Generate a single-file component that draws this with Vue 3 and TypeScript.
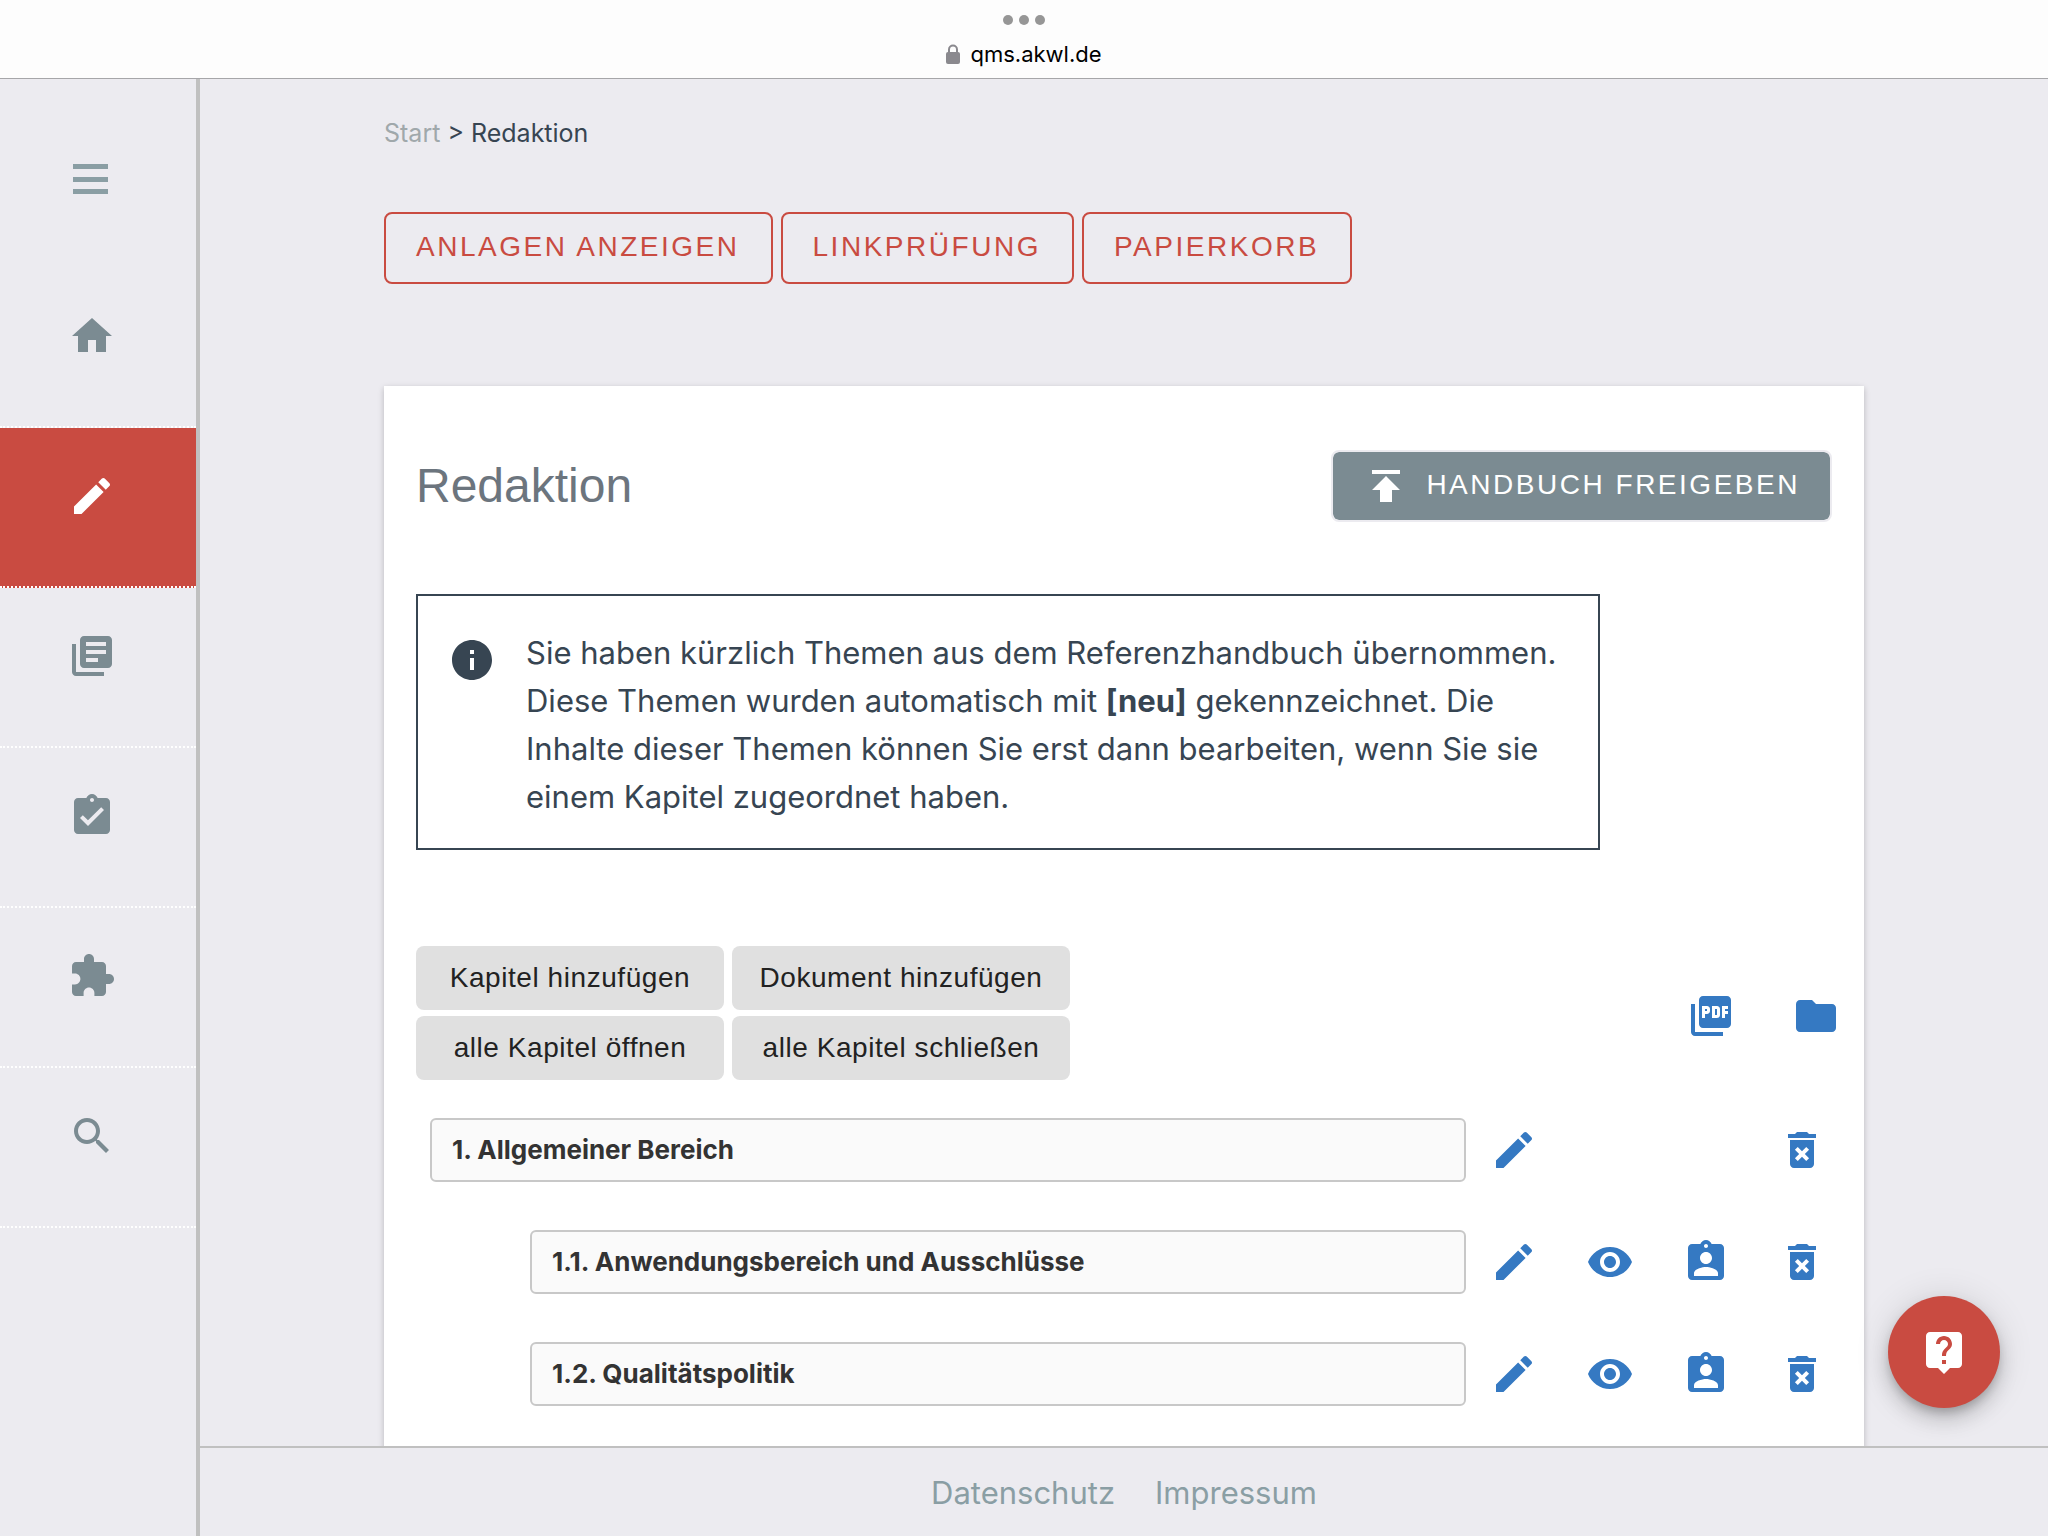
<script setup lang="ts">
import { ref } from 'vue'

type IconName = keyof typeof icons

interface NavItem {
  icon: IconName
  label: string
}

interface Chapter {
  number: string
  title: string
  level: number
  actions: (IconName | null)[]
}

const clipboard =
  'M19 3h-4.18C14.4 1.84 13.3 1 12 1c-1.3 0-2.4.84-2.82 2H5c-1.1 0-2 .9-2 2v14c0 1.1.9 2 2 2h14c1.1 0 2-.9 2-2V5c0-1.1-.9-2-2-2z'

const icons = {
  home: 'M10 20v-6h4v6h5v-8h3L12 3 2 12h3v8z',
  edit: 'M3 17.25V21h3.75L17.81 9.94l-3.75-3.75L3 17.25zM20.71 7.04c.39-.39.39-1.02 0-1.41l-2.34-2.34c-.39-.39-1.02-.39-1.41 0l-1.83 1.83 3.75 3.75 1.83-1.83z',
  library:
    'M4 6H2v14c0 1.1.9 2 2 2h14v-2H4V6zm16-4H8c-1.1 0-2 .9-2 2v12c0 1.1.9 2 2 2h12c1.1 0 2-.9 2-2V4c0-1.1-.9-2-2-2zm-1 9H9V9h10v2zm-4 4H9v-2h6v2zm4-8H9V5h10v2z',
  tasks: clipboard + 'm-7 0c.55 0 1 .45 1 1s-.45 1-1 1-1-.45-1-1 .45-1 1-1zm-2 14l-4-4 1.41-1.41L10 14.17l6.59-6.59L18 9l-8 8z',
  extension:
    'M20.5 11H19V7c0-1.1-.9-2-2-2h-4V3.5C13 2.12 11.88 1 10.5 1S8 2.12 8 3.5V5H4c-1.1 0-1.99.9-1.99 2v3.8H3.5c1.49 0 2.7 1.21 2.7 2.7s-1.21 2.7-2.7 2.7H2V20c0 1.1.9 2 2 2h3.8v-1.5c0-1.49 1.21-2.7 2.7-2.7 1.49 0 2.7 1.21 2.7 2.7V22H17c1.1 0 2-.9 2-2v-4h1.5c1.38 0 2.5-1.12 2.5-2.5S21.88 11 20.5 11z',
  search:
    'M15.5 14h-.79l-.28-.27C15.41 12.59 16 11.11 16 9.5 16 5.91 13.09 3 9.5 3S3 5.91 3 9.5 5.91 16 9.5 16c1.61 0 3.09-.59 4.23-1.57l.27.28v.79l5 4.99L20.49 19l-4.99-5zm-6 0C7.01 14 5 11.99 5 9.5S7.01 5 9.5 5 14 7.01 14 9.5 11.99 14 9.5 14z',
  publish: 'M5 4v2h14V4H5zm0 10h4v6h6v-6h4l-7-7-7 7z',
  info: 'M12 2C6.48 2 2 6.48 2 12s4.48 10 10 10 10-4.48 10-10S17.52 2 12 2zm1 15h-2v-6h2v6zm0-8h-2V7h2v2z',
  pdf: 'M20 2H8c-1.1 0-2 .9-2 2v12c0 1.1.9 2 2 2h12c1.1 0 2-.9 2-2V4c0-1.1-.9-2-2-2zm-8.5 7.5c0 .83-.67 1.5-1.5 1.5H9v2H7.5V7H10c.83 0 1.5.67 1.5 1.5v1zm5 2c0 .83-.67 1.5-1.5 1.5h-2.5V7H15c.83 0 1.5.67 1.5 1.5v3zm4-3H19v1h1.5V11H19v2h-1.5V7h3v1.5zM9 9.5h1v-1H9v1zM4 6H2v14c0 1.1.9 2 2 2h14v-2H4V6zm10 5.5h1v-3h-1v3z',
  folder: 'M10 4H4c-1.1 0-1.99.9-1.99 2L2 18c0 1.1.9 2 2 2h16c1.1 0 2-.9 2-2V8c0-1.1-.9-2-2-2h-8l-2-2z',
  view: 'M12 4.5C7 4.5 2.73 7.61 1 12c1.73 4.39 6 7.5 11 7.5s9.27-3.11 11-7.5c-1.73-4.39-6-7.5-11-7.5zM12 17c-2.76 0-5-2.24-5-5s2.24-5 5-5 5 2.24 5 5-2.24 5-5 5zm0-8c-1.66 0-3 1.34-3 3s1.34 3 3 3 3-1.34 3-3-1.34-3-3-3z',
  assign:
    clipboard +
    'm-7 0c.55 0 1 .45 1 1s-.45 1-1 1-1-.45-1-1 .45-1 1-1zm0 4c1.66 0 3 1.34 3 3s-1.34 3-3 3-3-1.34-3-3 1.34-3 3-3zm6 12H6v-1.4c0-2 4-3.1 6-3.1s6 1.1 6 3.1V19z',
  remove:
    'M6 19c0 1.1.9 2 2 2h8c1.1 0 2-.9 2-2V7H6v12zm2.46-7.12l1.41-1.41L12 12.59l2.12-2.12 1.41 1.41L13.41 14l2.12 2.12-1.41 1.41L12 15.41l-2.12 2.12-1.41-1.41L10.59 14l-2.13-2.12zM15.5 4l-1-1h-5l-1 1H5v2h14V4z',
  help: 'M19 2H5c-1.11 0-2 .9-2 2v14c0 1.1.89 2 2 2h4l3 3 3-3h4c1.1 0 2-.9 2-2V4c0-1.1-.9-2-2-2zm-6 16h-2v-2h2v2zm2.07-7.75l-.9.92C13.45 11.9 13 12.5 13 14h-2v-.5c0-1.1.45-2.1 1.17-2.83l1.24-1.26c.37-.36.59-.86.59-1.41 0-1.1-.9-2-2-2s-2 .9-2 2H8c0-2.21 1.79-4 4-4s4 1.79 4 4c0 .88-.36 1.68-.93 2.25z',
} as const

const actionLabels: Partial<Record<IconName, string>> = {
  edit: 'Bearbeiten',
  view: 'Ansehen',
  assign: 'Zuweisen',
  remove: 'Löschen',
}

const active = ref<IconName>('edit')

const navItems: NavItem[] = [
  { icon: 'home', label: 'Start' },
  { icon: 'edit', label: 'Redaktion' },
  { icon: 'library', label: 'Handbuch' },
  { icon: 'tasks', label: 'Aufgaben' },
  { icon: 'extension', label: 'Module' },
  { icon: 'search', label: 'Suche' },
]

const pageActions = ['Anlagen anzeigen', 'Linkprüfung', 'Papierkorb']

const chapterActions = ['Kapitel hinzufügen', 'Dokument hinzufügen', 'alle Kapitel öffnen', 'alle Kapitel schließen']

const chapters: Chapter[] = [
  { number: '1.', title: 'Allgemeiner Bereich', level: 0, actions: ['edit', null, null, 'remove'] },
  { number: '1.1.', title: 'Anwendungsbereich und Ausschlüsse', level: 1, actions: ['edit', 'view', 'assign', 'remove'] },
  { number: '1.2.', title: 'Qualitätspolitik', level: 1, actions: ['edit', 'view', 'assign', 'remove'] },
]
</script>

<template>
  <div class="screen">
    <header class="browser-bar">
      <div class="dots"><i></i><i></i><i></i></div>
      <div class="address">
        <svg class="lock" viewBox="0 0 14 20" aria-hidden="true">
          <path d="M3 9V5.500a4 4 0 0 1 8 0V9" fill="none" stroke="currentColor" stroke-width="2" />
          <rect x="0" y="8" width="14" height="12" rx="2" fill="currentColor" />
        </svg>
        <span>qms.akwl.de</span>
      </div>
    </header>

    <div class="app">
      <nav class="sidebar" aria-label="Hauptnavigation">
        <button type="button" class="menu" aria-label="Menü">
          <svg viewBox="0 0 36 32" aria-hidden="true">
            <path d="M0 1h35v5H0zM0 14h35v5H0zM0 26h35v5H0z" fill="currentColor" />
          </svg>
        </button>
        <a
          v-for="item in navItems"
          :key="item.icon"
          href="#"
          class="nav-item"
          :class="{ active: item.icon === active }"
          :aria-label="item.label"
          @click.prevent="active = item.icon"
        >
          <svg class="icon" viewBox="0 0 24 24" aria-hidden="true"><path :d="icons[item.icon]" /></svg>
        </a>
      </nav>

      <div class="content">
        <main class="page">
          <div class="breadcrumb"><a href="#">Start</a> &gt; <span>Redaktion</span></div>

          <div class="page-actions">
            <button v-for="label in pageActions" :key="label" type="button" class="outlined">{{ label }}</button>
          </div>

          <section class="card">
            <div class="card-head">
              <h1>Redaktion</h1>
              <button type="button" class="release">
                <svg class="icon" viewBox="0 0 24 24" aria-hidden="true"><path :d="icons.publish" /></svg>
                <span>Handbuch freigeben</span>
              </button>
            </div>

            <div class="notice">
              <svg class="icon" viewBox="0 0 24 24" aria-hidden="true"><path :d="icons.info" /></svg>
              <p>
                Sie haben kürzlich Themen aus dem Referenzhandbuch übernommen. Diese Themen wurden automatisch mit
                <b>[neu]</b> gekennzeichnet. Die Inhalte dieser Themen können Sie erst dann bearbeiten, wenn Sie sie
                einem Kapitel zugeordnet haben.
              </p>
            </div>

            <div class="toolbar">
              <div class="chapter-actions">
                <button v-for="label in chapterActions" :key="label" type="button">{{ label }}</button>
              </div>
              <div class="exports">
                <button type="button" class="icon-button" aria-label="PDF">
                  <svg class="icon" viewBox="0 0 24 24" aria-hidden="true"><path :d="icons.pdf" /></svg>
                </button>
                <button type="button" class="icon-button" aria-label="Ordner">
                  <svg class="icon" viewBox="0 0 24 24" aria-hidden="true"><path :d="icons.folder" /></svg>
                </button>
              </div>
            </div>

            <ul class="chapters">
              <li v-for="chapter in chapters" :key="chapter.number" :class="{ nested: chapter.level > 0 }">
                <button type="button" class="chapter">{{ chapter.number }} {{ chapter.title }}</button>
                <div class="row-actions">
                  <template v-for="(action, i) in chapter.actions" :key="i">
                    <button v-if="action" type="button" class="icon-button" :aria-label="actionLabels[action]">
                      <svg class="icon" viewBox="0 0 24 24" aria-hidden="true"><path :d="icons[action]" /></svg>
                    </button>
                    <span v-else></span>
                  </template>
                </div>
              </li>
            </ul>
          </section>
        </main>

        <footer class="footer">
          <a href="#">Datenschutz</a>
          <a href="#">Impressum</a>
        </footer>
      </div>
    </div>

    <button type="button" class="fab" aria-label="Hilfe">
      <svg class="icon" viewBox="0 0 24 24" aria-hidden="true"><path :d="icons.help" /></svg>
    </button>
  </div>
</template>

<style>
body {
  margin: 0;
  background: #ecebf0;
}
</style>

<style scoped>
.screen {
  display: flex;
  flex-direction: column;
  height: 100vh;
  overflow: hidden;
  background: #ecebf0;
  color: #374552;
  font-family: Inter, 'Liberation Sans', sans-serif;
}

.screen * {
  box-sizing: border-box;
}

button {
  margin: 0;
  padding: 0;
  border: 0;
  background: none;
  color: inherit;
  font-family: 'Liberation Sans', Arial, sans-serif;
  font-size: 28px;
  cursor: pointer;
}

a {
  color: inherit;
  text-decoration: none;
}

.icon {
  display: block;
  flex: none;
  width: 48px;
  height: 48px;
  fill: currentColor;
}

.browser-bar {
  display: flex;
  flex: none;
  flex-direction: column;
  align-items: center;
  gap: 14px;
  height: 79px;
  padding-top: 15px;
  border-bottom: 1px solid #a6a6a9;
  background: #fdfdfd;
}

.dots {
  display: flex;
  gap: 6px;
}

.dots i {
  width: 10px;
  height: 10px;
  border-radius: 50%;
  background: #969696;
}

.address {
  display: flex;
  align-items: center;
  gap: 10px;
  color: #000;
  font-size: 22px;
  line-height: 30px;
}

.lock {
  width: 14px;
  height: 20px;
  color: #8a898e;
}

.app {
  display: flex;
  flex: 1;
  min-height: 0;
}

.sidebar {
  flex: none;
  width: 200px;
  border-right: 4px solid #c0c0c0;
}

.menu {
  display: block;
  width: 100%;
  height: 189px;
  padding: 11px 87px 0 73px;
  color: #8a9ea4;
}

.menu svg {
  display: block;
  width: 36px;
  height: 32px;
}

.nav-item {
  display: block;
  height: 160px;
  padding: 44px 68px;
  border-bottom: 2px dotted #fff;
  color: #7b8b92;
}

.nav-item.active {
  background: #c94b41;
  color: #fff;
}

.content {
  display: flex;
  flex: 1;
  flex-direction: column;
  min-width: 0;
}

.page {
  flex: 1;
  min-height: 0;
  padding: 38px 184px 0;
  overflow: hidden;
}

.breadcrumb {
  font-size: 25px;
  line-height: 32px;
}

.breadcrumb a {
  color: #a0a8ab;
}

.page-actions {
  display: flex;
  gap: 8px;
  margin: 63px 0 102px;
}

.outlined {
  height: 72px;
  padding: 0 31px 2px 30px;
  border: 2px solid #c94b41;
  border-radius: 8px;
  color: #c94b41;
  letter-spacing: 0.09em;
  text-transform: uppercase;
}

.card {
  padding: 64px 32px;
  background: #fff;
  box-shadow: 0 2px 6px rgba(0, 0, 0, 0.22);
}

.card-head {
  display: flex;
  align-items: center;
  justify-content: space-between;
}

h1 {
  margin: 0;
  color: #6c757e;
  font-family: 'Liberation Sans', Arial, sans-serif;
  font-size: 48px;
  font-weight: 400;
  line-height: 72px;
}

.release {
  display: flex;
  align-items: center;
  gap: 16px;
  height: 72px;
  padding: 0 30px 0 29px;
  border: 2px solid #ecebf0;
  border-radius: 8px;
  background: #7b8b92;
  background-clip: padding-box;
  color: #fff;
  letter-spacing: 0.09em;
  text-transform: uppercase;
}

.release span {
  padding-bottom: 2px;
}

.notice {
  display: flex;
  gap: 30px;
  max-width: 1184px;
  margin-top: 72px;
  padding: 33px 40px 27px 30px;
  border: 2px solid #374552;
}

.notice .icon {
  margin-top: 7px;
}

.notice p {
  margin: 0;
  font-size: 31px;
  line-height: 48px;
}

.toolbar {
  display: flex;
  align-items: center;
  justify-content: space-between;
  margin: 96px -8px 0 0;
}

.chapter-actions {
  display: grid;
  grid-template-columns: 308px 338px;
  gap: 6px 8px;
}

.chapter-actions button {
  height: 64px;
  border-radius: 8px;
  background: #e0e0e0;
  color: #222;
  letter-spacing: 0.02em;
}

.exports {
  display: flex;
  gap: 57px;
  padding-top: 6px;
}

.icon-button {
  color: #3579c2;
}

.chapters {
  display: grid;
  gap: 48px;
  margin: 38px 6px 0 14px;
  padding: 0;
  list-style: none;
}

.chapters li {
  display: flex;
  align-items: center;
  gap: 24px;
}

.chapters li.nested {
  padding-left: 100px;
}

.chapter {
  flex: 1;
  height: 64px;
  padding: 0 20px 2px;
  border: 2px solid #c8c8c8;
  border-radius: 6px;
  background: #fafafa;
  color: #333;
  font-family: Inter, 'Liberation Sans', sans-serif;
  font-size: 26px;
  font-weight: 700;
  text-align: left;
}

.row-actions {
  display: grid;
  grid-template-columns: repeat(4, 48px);
  gap: 48px;
}

.footer {
  display: flex;
  flex: none;
  align-items: center;
  justify-content: center;
  gap: 40px;
  height: 90px;
  border-top: 2px solid #c0c0c0;
  color: #8a9ea4;
  font-size: 31px;
}

.fab {
  position: absolute;
  right: 48px;
  bottom: 128px;
  display: grid;
  place-items: center;
  width: 112px;
  height: 112px;
  border-radius: 50%;
  background: #c94b41;
  box-shadow:
    0 6px 10px -2px rgba(0, 0, 0, 0.2),
    0 12px 20px rgba(0, 0, 0, 0.14),
    0 2px 36px rgba(0, 0, 0, 0.12);
  color: #fff;
}
</style>
